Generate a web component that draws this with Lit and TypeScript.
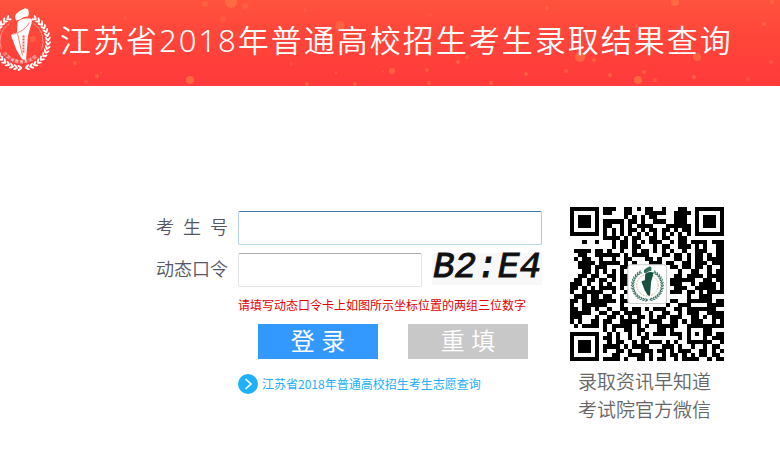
import { LitElement, html, svg, css } from "lit";
import { customElement } from "lit/decorators.js";

const QR_ROWS = [
  "#######.###..##.#.##..#...##..#######",
  "#.....#.##...##...#####..####.#.....#",
  "#.###.#......#.#.#.##....###..#.###.#",
  "#.###.#.#####.##.#..###..###..#.###.#",
  "#.###.#.##..#.#.####...######.#.###.#",
  "#.....#.#.#.#.##.#.##.##.#.##.#.....#",
  "#######.#.#.#.#.#.#.#.#.#.#.#.#######",
  "........####.#.##..##.##..##.........",
  "...#..#...#.##.#.#.###..#.##.####.###",
  "..........#.##.##...#.##..###.#.#..##",
  ".####.##.#..#..#.##.#.#.#..#..###..##",
  "..##..######.#.####...##.##.#.##.#.##",
  ".#.##..#..#..##...##.#...##.#.##.####",
  "..####.#####.#.#...###.##..##.###.###",
  "..###.###...##..........##.##.##.#..#",
  "...##.#.#.#.#.............#..##..#.##",
  "..##.##..##.##...........##.####.####",
  ".##.##.##.#.##..........######..##.##",
  "###.#..#.#..##..........###..#.####.#",
  "##.#.#.####.#............###..#####.#",
  "#..#####..#..##.........###.##.#.####",
  ".###.##.##..#...............#..###...",
  "##.#.######.##..........##..######.##",
  "#..######...#..........#..###....####",
  "##.##.#..#..##.##.#.###..##.#######..",
  "#####..##.##.####..#..##..#.###..####",
  "###...#..##.#.#.##.#.##.###..##.#.###",
  "#.#..##.##..#####..###..##.#.###..#.#",
  ".#.####.#.#####.#.#..#####..#########",
  "........#.#..##.##...##.#...#...##...",
  "#######..#.#..#.#.#.###.###.#.#.##.##",
  "#.....#.##.#..#..##.......#.#...#.###",
  "#.###.#..#.##..#.#.###.#.#..######..#",
  "#.###.#.####.#.####...###.#..#..#.##.",
  "#.###.#.#..##.#..###.##.#.###..##.#.#",
  "#.....#...##..####.#..#.##.#.#.##.##.",
  "#######.####.#..##.#.##..#.####..#.##",
];

const QR_PATH = QR_ROWS.map((row, y) =>
  [...row].map((cell, x) => (cell === "#" ? `M${x} ${y}h1v1h-1z` : "")).join(""),
).join("");

const TORCH_FLAME = "M-5.5 -27.5Q-2 -31 3.5 -33.2L6.5 -32.5Q8 -28 6.5 -25Q2 -25.5 -1.5 -22L-5 -21Q-7.5 -24 -5.5 -27.5Z";
const TORCH_BODY = "M-4 -18.5Q-4 -20 -1.5 -21.5Q3 -24 9 -23Q11 -22 10 -18L6.5 -6L4.5 18.5L.5 17.8L-5 8.5L-10.5 -6L-9.5 -7.5L-4.5 -9Z";

/* Pairs of leaves running round the lower part of a circle. */
const wreath = (radius: number, count: number, length: number, width: number) =>
  Array.from({ length: count }, (_, i) => {
    const angle = -57 + (294 * i) / (count - 1);
    const lean = angle < 90 ? 55 : -55;
    return svg`<g transform="rotate(${angle}) translate(${radius} 0)">
      <ellipse cx="2" rx="${length}" ry="${width}" transform="rotate(${-lean})"></ellipse>
      <ellipse cx="-2" rx="${length}" ry="${width}" transform="rotate(${lean})"></ellipse>
    </g>`;
  });

/* Bright specks on the banner: x, y, radius, opacity. */
const SPECKS = [
  [231, 2, 6, 0.5], [205, 4, 3, 0.3], [245, 6, 3, 0.3], [223, 19, 3, 0.25],
  [190, 80, 4, 0.6], [97, 76, 2, 0.5], [75, 63, 2, 0.5], [33, 39, 3, 0.4],
  [86, 82, 2, 0.3], [41, 66, 1, 0.5], [101, 73, 1, 0.5], [340, 26, 5, 0.4],
  [356, 29, 2, 0.3], [392, 71, 3, 0.5], [427, 70, 2, 0.5], [383, 71, 1, 0.5],
  [336, 73, 1, 0.5], [355, 84, 2, 0.5], [307, 84, 2, 0.5], [458, 62, 2, 0.5],
  [467, 57, 2, 0.4], [580, 57, 5, 0.5], [697, 57, 4, 0.5], [638, 80, 4, 0.6],
  [594, 60, 2, 0.5], [644, 72, 2, 0.5], [655, 80, 2, 0.4], [526, 74, 2, 0.5],
  [566, 71, 2, 0.4], [675, 2, 4, 0.5], [547, 8, 2, 0.3], [764, 24, 2, 0.4],
  [610, 75, 2, 0.5], [694, 77, 2, 0.5], [748, 79, 2, 0.3], [771, 62, 2, 0.3],
  [491, 83, 2, 0.5], [429, 83, 2, 0.4], [291, 64, 1, 0.5], [772, 2, 2, 0.4],
  [305, 10, 2, 0.2], [430, 15, 2, 0.2], [125, 18, 2, 0.2], [636, 26, 2, 0.3],
];

@customElement("app-root")
export class AppRoot extends LitElement {
  static styles = css`
    :host {
      display: block;
      font-family: "Noto Sans CJK SC", "Noto Sans", sans-serif;
      color: #666;
    }
    .banner {
      position: relative;
      display: flex;
      align-items: center;
      gap: 4px;
      height: 86px;
      overflow: hidden;
      background: linear-gradient(#ff523d, #ff453a 45%, #ff3a3b);
    }
    .specks {
      position: absolute;
      inset: 0;
      width: 100%;
      height: 100%;
    }
    .emblem {
      position: relative;
      flex: none;
      width: 56px;
      height: 86px;
    }
    .title {
      position: relative;
      margin: 0;
      padding-bottom: 6px;
      font-family: "Noto Sans", "Noto Sans CJK SC", sans-serif;
      font-size: 31px;
      font-weight: 350;
      line-height: 44px;
      letter-spacing: 2px;
      white-space: nowrap;
      color: #fff;
    }
    .main {
      display: flex;
      align-items: flex-start;
      gap: 28px;
      padding: 121px 0 32px 20%;
    }
    .form {
      display: grid;
      grid-template-columns: 72px 304px;
      column-gap: 10px;
      row-gap: 8px;
      padding-top: 4px;
    }
    .label {
      font-size: 18px;
      font-weight: 350;
      line-height: 30px;
      text-align-last: justify;
      white-space: nowrap;
      color: #556;
    }
    .field {
      box-sizing: border-box;
      width: 100%;
      min-width: 0;
      height: 34px;
      padding: 0 8px;
      border: 1px solid #e3e3ea;
      border-top-color: #abadb3;
      border-radius: 2px;
      background: #fff;
      font: inherit;
      font-size: 16px;
      outline: none;
    }
    .field.active {
      border-color: #3d7bad #a9c9e0 #b7d9ed #b5cfe7;
    }
    .code {
      display: grid;
      grid-template-columns: 184px 110px;
      column-gap: 10px;
    }
    .captcha {
      height: 32px;
      background: #f8f8f8;
      color: #111;
      font-family: "Liberation Mono", monospace;
      font-style: italic;
      font-size: 36px;
      line-height: 30px;
      text-align: center;
      -webkit-text-stroke: 1px #111;
    }
    .below {
      grid-column: 2;
    }
    .hint {
      margin: 0;
      font-size: 12px;
      line-height: 20px;
      white-space: nowrap;
      color: #e60000;
    }
    .buttons {
      display: flex;
      gap: 30px;
      padding-left: 20px;
      margin-top: 1px;
    }
    .button {
      width: 120px;
      height: 35px;
      padding: 0;
      border: 0;
      background: #39f;
      color: #fff;
      font-family: "Liberation Sans", "Noto Sans CJK SC", sans-serif;
      font-size: 24px;
      line-height: 35px;
    }
    .button.reset {
      background: #c8c8c8;
      font-weight: 350;
    }
    .link {
      display: flex;
      align-items: center;
      gap: 4px;
      margin-top: 7px;
      font-size: 12px;
      line-height: 20px;
      white-space: nowrap;
      text-decoration: none;
      color: #1eb0fa;
    }
    .arrow {
      width: 20px;
      height: 20px;
    }
    .wechat {
      margin: 0;
      width: 154px;
    }
    .qr {
      display: block;
      width: 100%;
    }
    .caption {
      padding: 6px 0 0 8px;
      font-size: 19px;
      font-weight: 350;
      line-height: 28px;
      white-space: nowrap;
      color: #666;
    }
  `;

  render() {
    return html`
      <header class="banner">
        <svg class="specks" viewBox="0 0 780 86" preserveAspectRatio="xMidYMid slice" aria-hidden="true">
          ${SPECKS.map(([x, y, r, o]) => svg`<circle cx=${x} cy=${y} r=${r} fill="#ff8448" opacity=${o}></circle>`)}
        </svg>
        <svg class="emblem" viewBox="0 0 56 86" aria-hidden="true">
          <g transform="translate(21.5 41.5)" fill="#fff">
            ${wreath(26.5, 33, 2.6, 1)}
            <path d="M12 -18A21.5 21.5 0 0 1 20 8M-20 8A21.5 21.5 0 0 1 -12 -18" fill="none" stroke="#fff" stroke-opacity=".6" stroke-width=".7"></path>
            <path d=${TORCH_FLAME}></path>
            <path d=${TORCH_BODY}></path>
            <path d="M-9 -7Q3 -10 8 -19M-4 -8L1 14" fill="none" stroke="#ff5a4c" stroke-width=".8"></path>
            <path d="M2 -6V12" fill="none" stroke="#ff5a4c" stroke-width="2" stroke-dasharray="2 1"></path>
            <path id="arc" d="M-20 9A22 22 0 0 0 20 9" fill="none"></path>
            <text font-size="4" letter-spacing="1"><textPath href="#arc" startOffset="3">江苏省教育考试院</textPath></text>
          </g>
        </svg>
        <h1 class="title">江苏省2018年普通高校招生考生录取结果查询</h1>
      </header>

      <main class="main">
        <form class="form" @submit=${(e: Event) => e.preventDefault()}>
          <label class="label" for="number">考 生 号</label>
          <input class="field active" id="number" type="text" />
          <label class="label" for="token">动态口令</label>
          <div class="code">
            <input class="field" id="token" type="text" />
            <div class="captcha">B2:E4</div>
          </div>
          <div class="below">
            <p class="hint">请填写动态口令卡上如图所示坐标位置的两组三位数字</p>
          </div>
          <div class="below">
            <div class="buttons">
              <button class="button" type="submit">登 录</button>
              <button class="button reset" type="reset">重 填</button>
            </div>
          </div>
          <div class="below">
            <a class="link" href="#">
              <svg class="arrow" viewBox="0 0 20 20" aria-hidden="true">
                <circle cx="10" cy="10" r="10" fill="#1eb0fa"></circle>
                <path d="M7.5 5L13 10L7.5 15" fill="none" stroke="#fff" stroke-width="1.6"></path>
              </svg>
              江苏省2018年普通高校招生考生志愿查询
            </a>
          </div>
        </form>

        <figure class="wechat">
          <svg class="qr" viewBox="0 0 37 37" role="img" aria-label="考试院官方微信">
            <path d=${QR_PATH} fill="#000" shape-rendering="crispEdges"></path>
            <rect x="13.9" y="13.9" width="9.3" height="9.3" rx=".8" fill="#fff" stroke="#ccc" stroke-width=".25"></rect>
            <g transform="translate(18.6 18.8) scale(.136)" fill="#3f7566">
              ${wreath(26, 29, 3, 1.1)}
              <circle r="19" fill="none" stroke="#c9a877" stroke-width="1.5" stroke-dasharray="3 2"></circle>
              <path d=${TORCH_FLAME} fill="#2f6b58"></path>
              <path d=${TORCH_BODY} fill="#17503f"></path>
            </g>
          </svg>
          <figcaption class="caption">录取资讯早知道<br />考试院官方微信</figcaption>
        </figure>
      </main>
    `;
  }
}
